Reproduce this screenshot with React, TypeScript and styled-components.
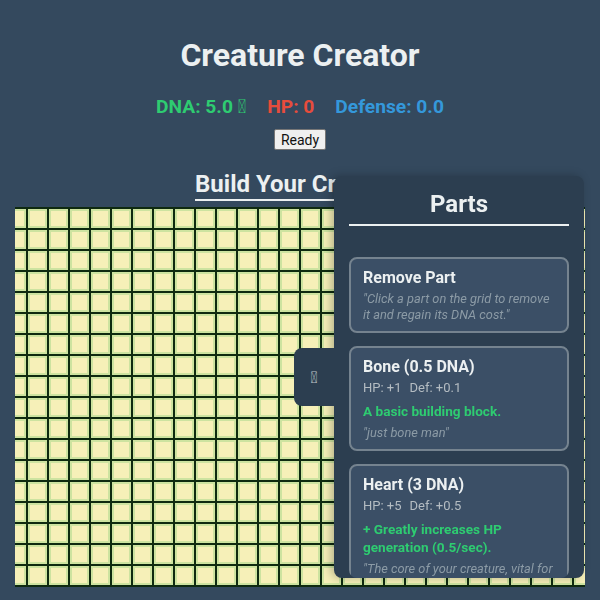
import React from 'react'
import styled, { createGlobalStyle } from 'styled-components'

const GlobalStyle = createGlobalStyle`
  html, body {
    margin: 0;
    padding: 0;
    background: #34495e;
    font-family: Roboto, "Liberation Sans", sans-serif;
    color: #ecf0f1;
  }
`;

const COLS = 30;
const ROWS = 18;

// 아이콘 자리 (폰트에 없는 글리프)
const ICON = '\uE000';

// 상단 헤더

const Page = styled.div`
  display: flex;
  flex-direction: column;
  align-items: center;
  padding: 36px 15px 0;
`;

const Title = styled.h1`
  margin: 0;
  font-size: 32px;
  line-height: 38px;
  font-weight: 700;
  color: #ecf0f1;
`;

const StatsRow = styled.div`
  display: flex;
  gap: 21px;
  margin-top: 22px;
  font-size: 19.2px;
  line-height: 22px;
  font-weight: 700;
`;

const Stat = styled.span<{ $color: string }>`
  color: ${p => p.$color};
`;

const ReadyButton = styled.button`
  margin-top: 11px;
  height: 21px;
  padding: 0 6px;
  font-family: Roboto, "Liberation Sans", sans-serif;
  font-size: 14px;
  color: #111;
  background: #efefef;
  border: 1px solid #767676;
  border-radius: 2px;
`;

const BuildTitle = styled.h2`
  margin: 20px 0 0;
  padding-bottom: 1px;
  font-size: 24px;
  line-height: 28px;
  font-weight: 700;
  color: #ecf0f1;
  border-bottom: 2px solid #ecf0f1;
`;

// 그리드

const Board = styled.div`
  margin-top: 6px;
  width: 570px;
  display: flex;
  justify-content: center;
  overflow: hidden;
  background: #0f2a10;
  padding: 2px 0;
`;

const CellGrid = styled.div`
  flex-shrink: 0;
  display: grid;
  grid-template-columns: repeat(${COLS}, 19px);
  grid-auto-rows: 19px;
  gap: 2px;
`;

const Cell = styled.div`
  box-sizing: border-box;
  background: #f6f0b8;
  border: 2px solid #cde3a0;
`;

// 파츠 패널

const PartsPanel = styled.aside`
  position: fixed;
  top: 176px;
  right: 16px;
  width: 250px;
  height: 402px;
  box-sizing: border-box;
  padding: 14px 15px 0;
  background: #2c3e50;
  border-radius: 8px;
  box-shadow: -3px 0 10px rgba(0, 0, 0, 0.25);
`;

const PanelScroll = styled.div`
  height: 100%;
  overflow: hidden;
  border-radius: 0 0 8px 8px;
`;

const ToggleTab = styled.div`
  position: absolute;
  left: -40px;
  top: 172px;
  width: 40px;
  height: 58px;
  display: flex;
  align-items: center;
  justify-content: center;
  background: #2c3e50;
  border-radius: 8px 0 0 8px;
  font-size: 16px;
  color: #bdc3c7;
`;

const PanelTitle = styled.h2`
  margin: 0;
  padding-bottom: 6px;
  text-align: center;
  font-size: 24px;
  line-height: 28px;
  font-weight: 700;
  border-bottom: 2px solid #ecf0f1;
`;

const PartList = styled.div`
  display: flex;
  flex-direction: column;
  gap: 13px;
  margin-top: 31px;
`;

const PartCard = styled.div`
  padding: 10px 12px 8px;
  background: #3b4f66;
  border: 2px solid #75838f;
  border-radius: 8px;
`;

const PartName = styled.div`
  font-size: 16px;
  line-height: 18px;
  font-weight: 700;
  color: #ecf0f1;
`;

const PartStats = styled.div`
  margin-top: 4px;
  font-size: 13px;
  line-height: 16px;
  color: #b4bcc2;

  span + span {
    margin-left: 8px;
  }
`;

const PartEffect = styled.div`
  margin-top: 6px;
  font-size: 13.6px;
  line-height: 18px;
  font-weight: 700;
  color: #2ecc71;
`;

const PartQuote = styled.div<{ $gap: number }>`
  margin-top: ${p => p.$gap}px;
  font-size: 12.8px;
  line-height: 16px;
  font-style: italic;
  color: #8c9ba6;
`;

type Part = {
  name: string;
  hp?: number;
  def?: number;
  effect?: string;
  quote: string;
};

const parts: Part[] = [
  {
    name: 'Remove Part',
    quote: '"Click a part on the grid to remove it and regain its DNA cost."',
  },
  {
    name: 'Bone (0.5 DNA)',
    hp: 1,
    def: 0.1,
    effect: 'A basic building block.',
    quote: '"just bone man"',
  },
  {
    name: 'Heart (3 DNA)',
    hp: 5,
    def: 0.5,
    effect: '+ Greatly increases HP generation (0.5/sec).',
    quote: '"The core of your creature, vital for survival."',
  },
];

function App() {
  return (
    <>
      <GlobalStyle />
      <Page>
        <Title>Creature Creator</Title>
        <StatsRow>
          <Stat $color="#2ecc71">DNA: 5.0 {ICON}</Stat>
          <Stat $color="#e74c3c">HP: 0</Stat>
          <Stat $color="#3498db">Defense: 0.0</Stat>
        </StatsRow>
        <ReadyButton>Ready</ReadyButton>
        <BuildTitle>Build Your Creature</BuildTitle>
        <Board>
          <CellGrid>
            {Array.from({ length: COLS * ROWS }, (_, i) => (
              <Cell key={i} />
            ))}
          </CellGrid>
        </Board>
      </Page>
      <PartsPanel>
        <ToggleTab>{ICON}</ToggleTab>
        <PanelScroll>
          <PanelTitle>Parts</PanelTitle>
          <PartList>
            {parts.map(part => (
              <PartCard key={part.name}>
                <PartName>{part.name}</PartName>
                {part.hp !== undefined && (
                  <PartStats>
                    <span>HP: +{part.hp}</span>
                    <span>Def: +{part.def}</span>
                  </PartStats>
                )}
                {part.effect && <PartEffect>{part.effect}</PartEffect>}
                <PartQuote $gap={part.effect ? 5 : 4}>{part.quote}</PartQuote>
              </PartCard>
            ))}
          </PartList>
        </PanelScroll>
      </PartsPanel>
    </>
  )
}

export default App
